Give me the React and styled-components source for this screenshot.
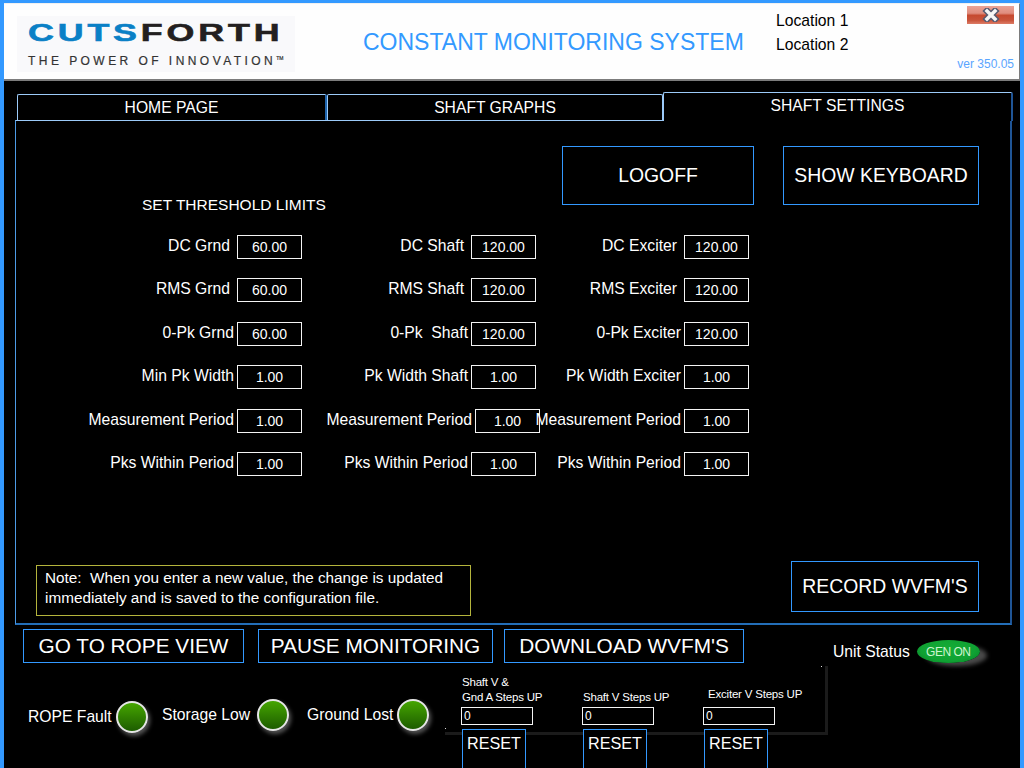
import React from 'react';
import styled, { createGlobalStyle } from 'styled-components';

const GlobalStyle = createGlobalStyle`
  html, body {
    margin: 0;
    padding: 0;
    background: #000;
    overflow: hidden;
  }
  * { box-sizing: border-box; }
`;

const Frame = styled.div`
  width: 1024px;
  height: 768px;
  display: flex;
  flex-direction: column;
  background: #000;
  border: 4px solid #3399ff;
  border-top-width: 3px;
  border-bottom: 0;
  overflow: hidden;
  color: #fff;
  font-family: "Liberation Sans", Arial, sans-serif;
  font-size: 15.7px;
`;

const Header = styled.div`
  flex: none;
  height: 78px;
  display: flex;
  background: #fefefe;
  border-top: 1px solid #f0f0f0;
  border-bottom: 2px solid #7c7c7c;
  border-right: 1px solid #7c7c7c;
  padding: 12px 5px 0 13px;
  color: #000;
`;

const Logo = styled.div`
  flex: none;
  width: 278px;
  height: 56px;
  background: #f9f9fb;
  padding: 4px 0 0 11px;
  overflow: hidden;
`;

const LogoName = styled.div`
  width: 260px;
  font-size: 24px;
  line-height: 25px;
  font-weight: 700;
  letter-spacing: 2.6px;
  white-space: nowrap;
  transform: scaleX(1.49);
  transform-origin: left center;
  -webkit-text-stroke: 0.6px currentColor;
  color: #231f20;
`;

const LogoBlue = styled.span`
  color: #0a80c6;
`;

const LogoTag = styled.div`
  margin-top: 10px;
  font-size: 12px;
  line-height: 12px;
  letter-spacing: 3.45px;
  white-space: nowrap;
  color: #333;
  -webkit-text-stroke: 0.2px currentColor;
`;

const Trademark = styled.sup`
  font-size: 5px;
  letter-spacing: 0;
  vertical-align: 5px;
  line-height: 0;
`;

const SystemTitle = styled.div`
  flex: none;
  width: 381px;
  margin: 12px 0 0 68px;
  font-size: 23px;
  line-height: 28px;
  color: #3399ff;
  white-space: nowrap;
`;

const Locations = styled.div`
  flex: none;
  margin: -7px 0 0 32px;
  line-height: 24px;
`;

const HeaderRight = styled.div`
  margin: -10px 0 0 auto;
  display: flex;
  flex-direction: column;
  align-items: flex-end;
`;

const CloseButton = styled.div`
  width: 47px;
  height: 18px;
  display: flex;
  align-items: center;
  justify-content: center;
  background: linear-gradient(#eaa396 0%, #e08d7e 40%, #c64a30 52%, #c9553c 80%, #dd7c66 100%);
`;

const Version = styled.div`
  margin-top: 33px;
  font-size: 12px;
  line-height: 14px;
  color: #5aa5ff;
`;

const Tabs = styled.div`
  flex: none;
  height: 28px;
  margin: 11px 0 0 13px;
  width: 996px;
  display: flex;
  align-items: flex-end;
  position: relative;
  z-index: 1;
`;

const Tab = styled.div`
  flex: none;
  width: ${({ $width }) => $width}px;
  height: ${({ $active }) => ($active ? 29 : 26)}px;
  margin-bottom: ${({ $active }) => ($active ? -1 : 0)}px;
  padding-top: 3px;
  text-align: center;
  line-height: 19px;
  background: #000;
  border: 1px solid #9ccaf8;
  border-right: ${({ $edge }) => ($edge ? `2px solid ${$edge}` : '1px solid #9ccaf8')};
  border-bottom: 0;
  border-radius: 2px 2px 0 0;
`;

const Panel = styled.div`
  flex: none;
  width: 997px;
  height: 505px;
  margin-left: 11px;
  padding: 25px 31px 11px 20px;
  display: flex;
  flex-direction: column;
  border: 1px solid #4d9be6;
  border-top-color: #9ccaf8;
  border-right: 2px solid #1f5596;
  border-bottom: 2px solid #236eb8;
`;

const PanelTop = styled.div`
  display: flex;
  gap: 29px;
`;

const SectionTitle = styled.div`
  align-self: flex-end;
  margin: 0 auto -9px 106px;
  font-size: 15.5px;
  line-height: 18px;
`;

const CommandButton = styled.div`
  flex: none;
  width: ${({ $width }) => $width}px;
  height: ${({ $height }) => $height}px;
  margin-left: ${({ $left }) => $left || 0}px;
  display: flex;
  align-items: center;
  justify-content: center;
  font-size: ${({ $size }) => $size || 19.4}px;
  white-space: nowrap;
  border: 1px solid #3399ff;
`;

const Limits = styled.div`
  display: flex;
  margin-top: 30px;
`;

const LimitColumn = styled.div`
  flex: none;
  width: ${({ $width }) => $width}px;
  display: flex;
  flex-direction: column;
  gap: 19.4px;
`;

const LimitRow = styled.div`
  height: 24px;
  display: flex;
  justify-content: flex-end;
  margin-right: ${({ $pull }) => $pull || 0}px;
`;

const LimitLabel = styled.div`
  flex: none;
  margin-right: ${({ $gap }) => $gap}px;
  line-height: 22px;
  white-space: pre;
`;

const ValueBox = styled.div`
  flex: none;
  width: 65px;
  height: 24px;
  padding-top: 1px;
  text-align: center;
  font-size: 14px;
  line-height: 20px;
  border: 1px solid #f4f4f4;
`;

const PanelBottom = styled.div`
  margin-top: auto;
  display: flex;
  justify-content: space-between;
  align-items: flex-end;
`;

const Note = styled.div`
  width: 435px;
  height: 51px;
  padding: 2px 8px;
  font-size: 15.3px;
  line-height: 20px;
  border: 1px solid #b4b43c;
  margin-bottom: -4px;
`;

const ControlBar = styled.div`
  flex: none;
  position: relative;
  display: flex;
  height: 34px;
  margin: 4px 0 0 19px;
`;

const UnitStatus = styled.div`
  position: absolute;
  left: 810px;
  top: 11px;
  display: flex;
  align-items: center;
  gap: 7px;
`;

const GenOn = styled.div`
  width: 63px;
  height: 23px;
  display: flex;
  align-items: center;
  justify-content: center;
  border-radius: 50%;
  font-size: 12px;
  letter-spacing: -0.5px;
  color: #cdf5d0;
  background: radial-gradient(ellipse at 50% 40%, #14ac36 0%, #10a233 60%, #067a28 100%);
  box-shadow: 8px 4px 4px -1px #4a4a4a;
`;

const StatusRow = styled.div`
  flex: 1;
  display: flex;
  min-height: 0;
`;

const Indicator = styled.div`
  flex: none;
  width: ${({ $width }) => $width}px;
  height: 34px;
  margin: ${({ $top }) => $top}px 0 0 ${({ $left }) => $left}px;
  display: flex;
  align-items: center;
  justify-content: space-between;
`;

const Lamp = styled.div`
  flex: none;
  width: 32px;
  height: 32px;
  border-radius: 50%;
  border: 2px solid #e6e6e6;
  background: linear-gradient(#45a500, #1d5c00);
  box-shadow: 2px 3px 4px #555;
`;

const StepGroup = styled.div`
  position: relative;
  margin: 3px 0 0 16px;
  display: flex;
  gap: 49px;
  padding-left: 16px;
  width: 380px;
  &::before {
    content: '';
    position: absolute;
    left: 0;
    top: 0;
    width: 380px;
    height: 66px;
    border-right: 3px solid #1b1b1b;
    border-bottom: 3px solid #1b1b1b;
  }
  &::after {
    content: '';
    position: absolute;
    left: 0;
    top: 62px;
    width: 1px;
    height: 1px;
    background: #ddd;
    box-shadow: 376px -62px #ddd;
  }
`;

const StepColumn = styled.div`
  position: relative;
  flex: none;
  width: 72px;
  display: flex;
  flex-direction: column;
`;

const StepLabel = styled.div`
  height: 43px;
  display: flex;
  flex-direction: column;
  justify-content: flex-end;
  margin-left: ${({ $indent }) => $indent || 0}px;
  padding-bottom: ${({ $lift }) => $lift || 0}px;
  font-size: 11.5px;
  letter-spacing: -0.2px;
  line-height: 15px;
  white-space: nowrap;
`;

const StepValue = styled.div`
  height: 18px;
  padding-left: 2px;
  font-size: 12px;
  line-height: 17px;
  background: #000;
  border: 1px solid #f4f4f4;
`;

const ResetButton = styled.div`
  width: 64px;
  height: 40px;
  margin: 4px 0 0 1px;
  padding-top: 3px;
  text-align: center;
  font-size: 16.2px;
  line-height: 21px;
  background: #000;
  border: 1px solid #3399ff;
  border-bottom: 0;
`;

const limitColumns = [
  {
    width: 266,
    rows: [
      ['DC Grnd', '60.00', 7],
      ['RMS Grnd', '60.00', 7],
      ['0-Pk Grnd', '60.00', 3],
      ['Min Pk Width', '1.00', 3],
      ['Measurement Period', '1.00', 3],
      ['Pks Within Period', '1.00', 3],
    ],
  },
  {
    width: 234,
    rows: [
      ['DC Shaft', '120.00', 7],
      ['RMS Shaft', '120.00', 7],
      ['0-Pk  Shaft', '120.00', 3],
      ['Pk Width Shaft', '1.00', 3],
      ['Measurement Period', '1.00', 3, -4],
      ['Pks Within Period', '1.00', 3],
    ],
  },
  {
    width: 213,
    rows: [
      ['DC Exciter', '120.00', 7],
      ['RMS Exciter', '120.00', 7],
      ['0-Pk Exciter', '120.00', 3],
      ['Pk Width Exciter', '1.00', 3],
      ['Measurement Period', '1.00', 3],
      ['Pks Within Period', '1.00', 3],
    ],
  },
];

const steps = [
  { label: ['Shaft V &', 'Gnd A Steps UP'], indent: 1, lift: 2 },
  { label: ['Shaft V Steps UP'], indent: 1, lift: 2 },
  { label: ['Exciter V Steps UP'], indent: 5, lift: 5 },
];

const CloseIcon = () => (
  <svg width="18" height="14" viewBox="0 0 18 14">
    <path d="M5 3 L13 11 M13 3 L5 11" stroke="#565a70" strokeWidth="6.5" strokeLinecap="square" />
    <path d="M5 3 L13 11 M13 3 L5 11" stroke="#f6f6f6" strokeWidth="3.5" strokeLinecap="square" />
  </svg>
);

const App = () => (
  <Frame>
    <GlobalStyle />
    <Header>
      <Logo>
        <LogoName>
          <LogoBlue>CUTS</LogoBlue>FORTH
        </LogoName>
        <LogoTag>
          THE POWER OF INNOVATION<Trademark>TM</Trademark>
        </LogoTag>
      </Logo>
      <SystemTitle>CONSTANT MONITORING SYSTEM</SystemTitle>
      <Locations>
        <div>Location 1</div>
        <div>Location 2</div>
      </Locations>
      <HeaderRight>
        <CloseButton>
          <CloseIcon />
        </CloseButton>
        <Version>ver 350.05</Version>
      </HeaderRight>
    </Header>

    <Tabs>
      <Tab $width={310} $edge="#1f65ad">HOME PAGE</Tab>
      <Tab $width={336}>SHAFT GRAPHS</Tab>
      <Tab $width={350} $active $edge="#1f5596">SHAFT SETTINGS</Tab>
    </Tabs>

    <Panel>
      <PanelTop>
        <SectionTitle>SET THRESHOLD LIMITS</SectionTitle>
        <CommandButton $width={192} $height={59}>LOGOFF</CommandButton>
        <CommandButton $width={196} $height={59}>SHOW KEYBOARD</CommandButton>
      </PanelTop>

      <Limits>
        {limitColumns.map((column, c) => (
          <LimitColumn key={c} $width={column.width}>
            {column.rows.map(([label, value, gap, pull]) => (
              <LimitRow key={label} $pull={pull}>
                <LimitLabel $gap={gap}>{label}</LimitLabel>
                <ValueBox>{value}</ValueBox>
              </LimitRow>
            ))}
          </LimitColumn>
        ))}
      </Limits>

      <PanelBottom>
        <Note>
          Note:&nbsp; When you enter a new value, the change is updated
          <br />
          immediately and is saved to the configuration file.
        </Note>
        <CommandButton $width={188} $height={51}>RECORD WVFM'S</CommandButton>
      </PanelBottom>
    </Panel>

    <ControlBar>
      <CommandButton $width={221} $height={34} $size={20.8}>GO TO ROPE VIEW</CommandButton>
      <CommandButton $width={235} $height={34} $size={20.8} $left={14}>PAUSE MONITORING</CommandButton>
      <CommandButton $width={240} $height={34} $size={20.8} $left={11}>DOWNLOAD WVFM'S</CommandButton>
      <UnitStatus>
        Unit Status
        <GenOn>GEN ON</GenOn>
      </UnitStatus>
    </ControlBar>

    <StatusRow>
      <Indicator $width={120} $left={24} $top={37}>ROPE Fault<Lamp /></Indicator>
      <Indicator $width={127} $left={14} $top={35}>Storage Low<Lamp /></Indicator>
      <Indicator $width={122} $left={18} $top={35}>Ground Lost<Lamp /></Indicator>
      <StepGroup>
        {steps.map((step) => (
          <StepColumn key={step.label.join()}>
            <StepLabel $indent={step.indent} $lift={step.lift}>
              {step.label.map((line) => (
                <div key={line}>{line}</div>
              ))}
            </StepLabel>
            <StepValue>0</StepValue>
            <ResetButton>RESET</ResetButton>
          </StepColumn>
        ))}
      </StepGroup>
    </StatusRow>
  </Frame>
);

export default App;
